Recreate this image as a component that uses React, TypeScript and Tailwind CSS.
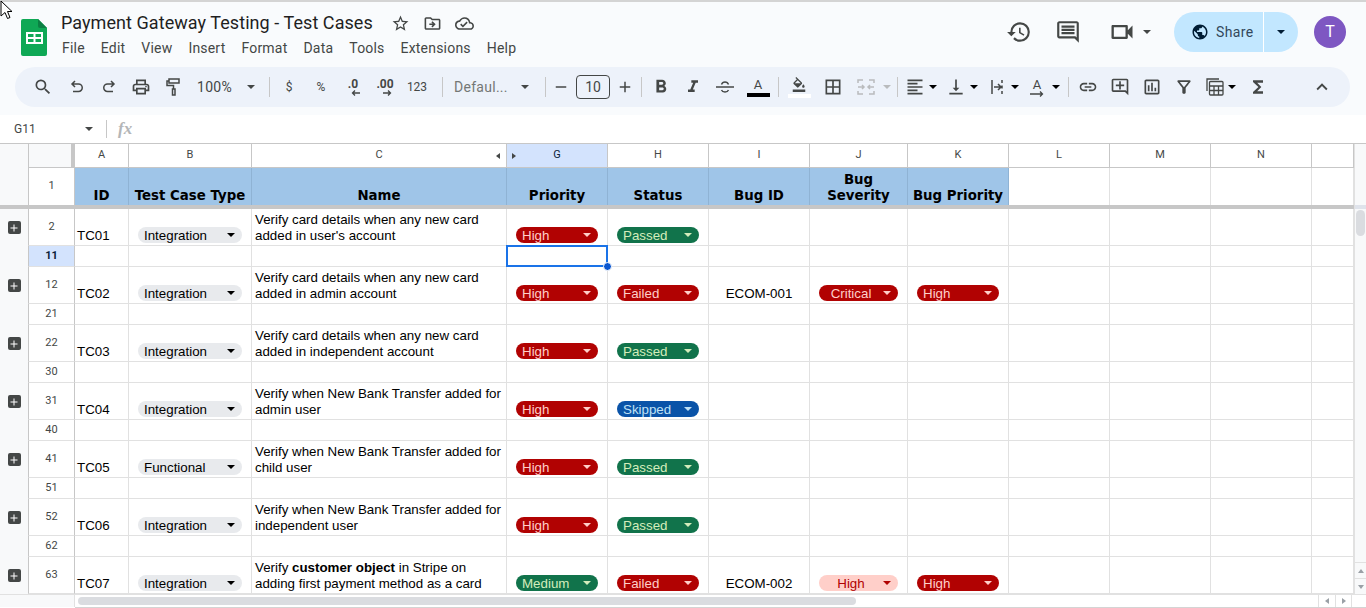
import React from 'react';
import {
  MdSearch, MdOutlinePrint, MdFormatBold, MdFormatItalic,
  MdFormatColorFill, MdBorderAll, MdFormatAlignLeft, MdVerticalAlignBottom, MdLink,
  MdOutlineAddComment, MdOutlineInsertChart, MdOutlineFilterAlt, MdFunctions, MdExpandLess, MdHistory,
  MdOutlineComment, MdOutlineVideocam, MdPublic, MdStarBorder, MdOutlineDriveFileMove, MdOutlineCloudDone,
  MdAdd, MdRemove,
} from 'react-icons/md';

const COLS = 'grid grid-cols-[28px_47px_54px_123px_255px_101px_101px_101px_98px_101px_101px_101px_101px_42px]';

type ChipKind = 'high' | 'passed' | 'failed' | 'skipped' | 'medium' | 'critical' | 'pale';

const chipStyles: Record<ChipKind, { cls: string; label: string }> = {
  high: { cls: 'bg-[#b10202] text-[#ffcfc9]', label: 'High' },
  passed: { cls: 'bg-[#11734b] text-[#d4edbc]', label: 'Passed' },
  failed: { cls: 'bg-[#b10202] text-[#ffcfc9]', label: 'Failed' },
  skipped: { cls: 'bg-[#0a53a8] text-[#bfe1f6]', label: 'Skipped' },
  medium: { cls: 'bg-[#11734b] text-[#d4edbc]', label: 'Medium' },
  critical: { cls: 'bg-[#b10202] text-[#ffcfc9]', label: 'Critical' },
  pale: { cls: 'bg-[#ffcfc9] text-[#b10202]', label: 'High' },
};

const rows = [
  { num: '2', gap: '11', id: 'TC01', type: 'Integration', name: <>Verify card details when any new card<br />added in user's account</>, priority: 'high', status: 'passed' },
  { num: '12', gap: '21', id: 'TC02', type: 'Integration', name: <>Verify card details when any new card<br />added in admin account</>, priority: 'high', status: 'failed', bug: 'ECOM-001', severity: 'critical', bugPriority: 'high' },
  { num: '22', gap: '30', id: 'TC03', type: 'Integration', name: <>Verify card details when any new card<br />added in independent account</>, priority: 'high', status: 'passed' },
  { num: '31', gap: '40', id: 'TC04', type: 'Integration', name: <>Verify when New Bank Transfer added for<br />admin user</>, priority: 'high', status: 'skipped' },
  { num: '41', gap: '51', id: 'TC05', type: 'Functional', name: <>Verify when New Bank Transfer added for<br />child user</>, priority: 'high', status: 'passed' },
  { num: '52', gap: '62', id: 'TC06', type: 'Integration', name: <>Verify when New Bank Transfer added for<br />independent user</>, priority: 'high', status: 'passed' },
  { num: '63', id: 'TC07', type: 'Integration', name: <>Verify <b>customer object</b> in Stripe on<br />adding first payment method as a card</>, priority: 'medium', status: 'failed', bug: 'ECOM-002', severity: 'pale', bugPriority: 'high' },
] as { num: string; gap?: string; id: string; type: string; name: React.ReactNode; priority: ChipKind; status: ChipKind; bug?: string; severity?: ChipKind; bugPriority?: ChipKind }[];

const Caret = ({ className = 'text-[#444746]' }: { className?: string }) => (
  <svg width="8" height="4" viewBox="0 0 8 4" className={`shrink-0 ${className}`}>
    <path d="M0 0h8L4 4z" fill="currentColor" />
  </svg>
);

const Btn = ({ children, className = '' }: { children: React.ReactNode; className?: string }) => (
  <div className={`w-8 h-8 shrink-0 flex items-center justify-center text-[#444746] ${className}`}>{children}</div>
);

const Sep = ({ className = '' }: { className?: string }) => (
  <div className={`w-px h-5 shrink-0 bg-[#c7c7c7] ${className}`} />
);

const Chip = ({ label, cls, center }: { label: string; cls: string; center?: boolean }) => (
  <div className={`h-4 rounded-full flex items-center pr-[7px] ${center ? '' : 'pl-[6px]'} ${cls}`}>
    <span className={`flex-1 leading-4 pt-[2px] ${center ? 'text-center' : ''}`}>{label}</span>
    <Caret className="text-current" />
  </div>
);

const StatusChip = ({ kind, center }: { kind: ChipKind; center?: boolean }) => (
  <Chip label={chipStyles[kind].label} cls={chipStyles[kind].cls} center={center} />
);

const SheetsLogo = () => (
  <svg width="26" height="37" viewBox="0 0 26 37" className="shrink-0">
    <path d="M2 0h15l9 9v26a2 2 0 0 1-2 2H2a2 2 0 0 1-2-2V2a2 2 0 0 1 2-2z" fill="#0fa855" />
    <path d="M17 0l9 9h-7a2 2 0 0 1-2-2z" fill="#0b8043" />
    <path d="M5 13h17v12H5z M7 15v3h5.500v-3z M14.500 15v3h5.500v-3z M7 20v3h5.500v-3z M14.500 20v3h5.500v-3z" fill="#fff" fillRule="evenodd" />
  </svg>
);

const Header = () => (
  <div className="h-[115px] shrink-0 bg-[#f9fbfd] border-t-2 border-[#d4d4d4] relative">
    <div className="h-[65px] flex pl-[21px] pr-5">
      <div className="pt-[17px]"><SheetsLogo /></div>
      <div className="ml-[14px] pt-[9px]">
        <div className="flex items-center h-6">
          <span className="text-[18px] leading-6 text-[#1f1f1f] font-['Roboto',sans-serif] tracking-[0.06px]">Payment Gateway Testing - Test Cases</span>
          <MdStarBorder className="ml-[18px] text-[#444746]" size={19} />
          <MdOutlineDriveFileMove className="ml-[13px] text-[#444746]" size={19} />
          <MdOutlineCloudDone className="ml-[13px] text-[#444746]" size={19} />
        </div>
        <div className="flex gap-4 ml-px mt-[3px] text-[14px] leading-5 text-[#444746] font-['Roboto',sans-serif] tracking-[0.2px]">
          <span>File</span><span>Edit</span><span>View</span><span>Insert</span><span>Format</span><span>Data</span><span>Tools</span><span>Extensions</span><span>Help</span>
        </div>
      </div>
      <div className="ml-auto flex items-center h-[60px] text-[#444746]">
        <MdHistory size={26} />
        <MdOutlineComment className="ml-[23px]" size={26} />
        <MdOutlineVideocam className="ml-[27px]" size={28} />
        <Caret className="ml-[7px] text-[#444746]" />
        <div className="ml-[23px] w-[124px] h-10 rounded-full bg-[#c2e7ff] flex items-center text-[#001d35]">
          <div className="w-[90px] h-full shrink-0 flex items-center pl-[17px] gap-[7px] border-r border-white">
            <MdPublic size={18} />
            <span className="text-[14px] text-[#33475b] font-['Roboto',sans-serif] tracking-[0.4px]">Share</span>
          </div>
          <div className="flex-1 flex justify-center"><Caret className="text-[#001d35]" /></div>
        </div>
        <div className="ml-4 w-8 h-8 rounded-full bg-[#7e57c2] text-white flex items-center justify-center text-[16px] font-['Roboto',sans-serif]">T</div>
      </div>
    </div>
    <Toolbar />
    <svg width="13" height="20" viewBox="0 0 13 20" className="absolute left-0 -top-[2px]">
      <path d="M1 1v15l4-3.500 2.500 6 2.500-1-2.500-6H12z" fill="#fff" stroke="#000" strokeWidth="1" />
    </svg>
  </div>
);

const Toolbar = () => (
  <div className="mx-[15px] h-10 w-[1335px] rounded-full bg-[#edf2fa] flex items-center pl-3 font-['Roboto',sans-serif]">
    <Btn><MdSearch size={20} /></Btn>
    <Btn className="ml-[2px]">
      <svg width="14" height="14" viewBox="0 0 14 14" fill="none" stroke="currentColor" strokeWidth="1.500">
        <path d="M5 1 2 4l3 3M2 4h6.500a3.750 3.750 0 0 1 0 7.500H3" />
      </svg>
    </Btn>
    <Btn>
      <svg width="14" height="14" viewBox="0 0 14 14" fill="none" stroke="currentColor" strokeWidth="1.500">
        <path d="M9 1l3 3-3 3M12 4H5.500a3.750 3.750 0 0 0 0 7.500H11" />
      </svg>
    </Btn>
    <Btn><MdOutlinePrint size={20} /></Btn>
    <Btn>
      <svg width="15" height="18" viewBox="0 0 15 18" fill="none" stroke="currentColor" strokeWidth="1.500">
        <path d="M3 1h10v4H3zM3 3H1v4.500h6.500V11M6.500 11h2.500v6H6.500z" />
      </svg>
    </Btn>
    <div className="w-[74px] shrink-0 flex items-center justify-between px-2 text-[14px] text-[#444746]">
      <span className="tracking-[0.02em]">100%</span><Caret />
    </div>
    <Sep className="ml-[6px]" />
    <Btn className="ml-[3px] text-[12px] text-[#5f6368]">$</Btn>
    <Btn className="text-[12px] text-[#5f6368]">%</Btn>
    <Btn>
      <div className="flex flex-col items-center leading-none">
        <span className="text-[12px] font-bold leading-[11px] text-[#444746]">.0</span>
        <svg width="9" height="6" viewBox="0 0 9 6" className="ml-[5px]"><path d="M9 3H2M4 .500 1.500 3 4 5.500" fill="none" stroke="#444746" strokeWidth="1.300" /></svg>
      </div>
    </Btn>
    <Btn>
      <div className="flex flex-col items-center leading-none">
        <span className="text-[12px] font-bold leading-[11px] text-[#444746]">.00</span>
        <svg width="9" height="6" viewBox="0 0 9 6" className="ml-[5px]"><path d="M0 3h7M5 .500 7.500 3 5 5.500" fill="none" stroke="#444746" strokeWidth="1.300" /></svg>
      </div>
    </Btn>
    <Btn className="text-[12px] text-[#5f6368]">123</Btn>
    <Sep className="ml-[9px]" />
    <div className="ml-[11px] w-[75px] shrink-0 flex items-center justify-between text-[14px] text-[#747775]">
      <span className="tracking-[0.02em]">Defaul...</span><Caret />
    </div>
    <Sep className="ml-4" />
    <div className="ml-[3px] w-6 flex justify-center text-[#444746]"><MdRemove size={18} /></div>
    <div className="ml-[3px] w-[34px] h-6 border border-[#444746] rounded flex items-center justify-center text-[14px] text-[#444746]">10</div>
    <div className="ml-[3px] w-6 flex justify-center text-[#444746]"><MdAdd size={18} /></div>
    <Sep className="ml-1" />
    <Btn className="ml-[3px]"><MdFormatBold size={22} /></Btn>
    <Btn><MdFormatItalic size={20} /></Btn>
    <Btn>
      <svg width="18" height="14" viewBox="0 0 18 14" fill="none" stroke="currentColor" strokeWidth="1.400">
        <path d="M0 7h18M5.500 4.500C6 3 7.500 2 9 2s3 1 3.500 2.500M5.500 10c.5 1.300 2 2 3.500 2s3-.7 3.500-2" />
      </svg>
    </Btn>
    <Btn className="ml-px">
      <div className="flex flex-col items-center">
        <span className="text-[13px] leading-[14px] text-[#444746]">A</span>
        <div className="w-[23px] h-1 bg-black mt-px" />
      </div>
    </Btn>
    <Sep className="ml-1" />
    <Btn className="ml-1">
      <div className="flex flex-col items-center">
        <MdFormatColorFill size={16} className="h-[15px]" />
        <div className="w-[23px] h-1 bg-white mt-[2px]" />
      </div>
    </Btn>
    <Btn className="ml-[2px]"><MdBorderAll size={20} /></Btn>
    <Btn className="ml-px text-[#b9bbbd]">
      <svg width="18" height="18" viewBox="0 0 18 18" fill="none" stroke="currentColor" strokeWidth="1.500">
        <path d="M1 5V2h5M12 2h5v3M1 13v3h5M12 16h5v-3M1 9h6M5 7l2 2-2 2M17 9h-6M13 7l-2 2 2 2" />
      </svg>
    </Btn>
    <Caret className="ml-px text-[#b9bbbd]" />
    <Sep className="ml-[6px]" />
    <Btn className="ml-px"><MdFormatAlignLeft size={20} /></Btn>
    <Caret className="-ml-[2px]" />
    <Btn className="ml-[3px]"><MdVerticalAlignBottom size={20} /></Btn>
    <Caret className="-ml-[2px]" />
    <Btn className="ml-[3px]">
      <svg width="18" height="18" viewBox="0 0 18 18" fill="none" stroke="#444746" strokeWidth="1.500">
        <path d="M4 2v14M14 2v3M14 7.500v3M14 13v3M6 9h7M10 6l3 3-3 3" />
      </svg>
    </Btn>
    <Caret className="-ml-[2px]" />
    <Btn className="ml-[2px]">
      <div className="flex flex-col items-center">
        <span className="text-[13px] leading-[13px] text-[#444746]">A</span>
        <svg width="14" height="6" viewBox="0 0 14 6"><path d="M0 3h12M10 .500 12.500 3 10 5.500" fill="none" stroke="#444746" strokeWidth="1.300" /></svg>
      </div>
    </Btn>
    <Caret className="-ml-px" />
    <Sep className="ml-2" />
    <Btn className="ml-[3px]"><MdLink size={20} /></Btn>
    <Btn><MdOutlineAddComment size={20} /></Btn>
    <Btn><MdOutlineInsertChart size={20} /></Btn>
    <Btn><MdOutlineFilterAlt size={20} /></Btn>
    <Btn className="-ml-px">
      <svg width="18" height="18" viewBox="0 0 18 18" fill="none" stroke="#444746" strokeWidth="1.300">
        <path d="M1 13V1h12" />
        <rect x="3.500" y="3.500" width="13.500" height="13.500" rx="1" />
        <path d="M3.500 8h13.500M8 8v9M12.500 8v9M3.500 12.500h13.500" />
      </svg>
    </Btn>
    <Caret className="-ml-[3px]" />
    <Btn className="ml-[6px]"><MdFunctions size={20} /></Btn>
    <Btn className="ml-8"><MdExpandLess size={22} /></Btn>
  </div>
);

const FormulaBar = () => (
  <div className="h-[29px] shrink-0 bg-white border-b border-[#c7c7c7] flex items-center">
    <span className="ml-[14px] w-[71px] text-[12px] text-[#444746] font-['Roboto',sans-serif]">G11</span>
    <Caret />
    <div className="ml-[13px] w-px h-[18px] bg-[#c7c7c7]" />
    <span className="ml-[11px] text-[17px] font-bold italic text-[#b4b6b8] font-['Liberation_Serif',serif]">fx</span>
  </div>
);

const letters = ['A', 'B', 'C', 'G', 'H', 'I', 'J', 'K', 'L', 'M', 'N', ''];
const titles = ['ID', 'Test Case Type', 'Name', 'Priority', 'Status', 'Bug ID', <>Bug<br />Severity</>, 'Bug Priority'];

const ColumnHeaders = () => (
  <div className={`${COLS} h-6 text-[11px] text-[#444746] font-['Roboto',sans-serif]`}>
    <div className="bg-[#f8f9fa]" />
    <div className="flex border-l border-b border-[#c7c7c7] bg-[#f8f9fa]">
      <div className="flex-1" />
      <div className="w-1 -mb-px bg-[#c7c7c7]" />
    </div>
    {letters.map((l, i) => (
      <div key={i} className={`relative flex items-center justify-center border-r border-b border-[#c7c7c7] ${l === 'G' ? 'bg-[#d3e3fd] text-[#0b1f3a]' : 'bg-white'}`}>
        {l}
        {l === 'C' && <svg width="4" height="6" viewBox="0 0 4 6" className="absolute right-[6px] top-[9px]"><path d="M4 0v6L0 3z" fill="#444746" /></svg>}
        {l === 'G' && <svg width="4" height="6" viewBox="0 0 4 6" className="absolute left-[5px] top-[9px]"><path d="M0 0v6l4-3z" fill="#444746" /></svg>}
      </div>
    ))}
  </div>
);

const TitleRow = () => (
  <div className={`${COLS} h-[37px]`}>
    <div className="bg-[#f8f9fa]" />
    <div className="flex items-center justify-center bg-white border-l border-r border-[#c7c7c7] text-[11px] text-[#444746] font-['Roboto',sans-serif]">1</div>
    {titles.map((t, i) => (
      <div key={i} className="flex items-end justify-center text-center bg-[#9fc5e8] border-r border-[#8fb3d4] text-[13.33px] leading-4 font-bold text-black font-['DejaVu_Sans',sans-serif] pb-px whitespace-nowrap">
        <div>{t}</div>
      </div>
    ))}
    {[0, 1, 2, 3].map((i) => (
      <div key={i} className="bg-white border-r border-[#e1e1e1]" />
    ))}
  </div>
);

const Cell = ({ children, className = 'pb-[2px]' }: { children?: React.ReactNode; className?: string }) => (
  <div className={`border-r border-b border-[#e1e1e1] flex flex-col justify-end ${className}`}>{children}</div>
);

const RowNum = ({ n, active }: { n: string; active?: boolean }) => (
  <div className={`flex items-center justify-center border-l border-r border-b border-[#c7c7c7] border-b-[#e1e1e1] text-[11px] font-['Roboto',sans-serif] ${active ? 'bg-[#d3e3fd] text-[#0b1f3a] font-bold' : 'bg-white text-[#444746]'}`}>{n}</div>
);

const DataRow = ({ row }: { row: (typeof rows)[number] }) => (
  <div className={`${COLS} h-[37px] text-[13.33px] leading-4 text-black font-['Liberation_Sans',sans-serif]`}>
    <div className="bg-[#f8f9fa] flex items-center justify-center">
      <div className="w-[13px] h-[13px] rounded-[2px] bg-[#444746] text-white flex items-center justify-center"><MdAdd size={12} /></div>
    </div>
    <RowNum n={row.num} />
    <Cell className="pl-[2px] pb-px">{row.id}</Cell>
    <Cell className="pl-[9px] pr-[9px] pb-[2px]"><Chip label={row.type} cls="bg-[#e8eaed] text-black" /></Cell>
    <Cell className="pl-[3px] pb-px whitespace-nowrap"><div>{row.name}</div></Cell>
    <Cell className="pl-[9px] pr-[9px] pb-[2px]"><StatusChip kind={row.priority} /></Cell>
    <Cell className="pl-[9px] pr-[9px] pb-[2px]"><StatusChip kind={row.status} /></Cell>
    <Cell className="text-center pb-px">{row.bug}</Cell>
    <Cell className="pl-[9px] pr-[9px] pb-[2px]">{row.severity && <StatusChip kind={row.severity} center />}</Cell>
    <Cell className="pl-[9px] pr-[9px] pb-[2px]">{row.bugPriority && <StatusChip kind={row.bugPriority} />}</Cell>
    <Cell /><Cell /><Cell /><Cell />
  </div>
);

const GapRow = ({ n, selected }: { n: string; selected?: boolean }) => (
  <div className={`${COLS} h-[21px]`}>
    <div className="bg-[#f8f9fa]" />
    <RowNum n={n} active={selected} />
    <Cell /><Cell /><Cell />
    <Cell className="relative">
      {selected && (
        <>
          <div className="absolute -left-px -top-px -right-px -bottom-px border-2 border-[#1a73e8]" />
          <div className="absolute -right-[5px] -bottom-[5px] w-[9px] h-[9px] rounded-full bg-[#0b57d0] border border-white" />
        </>
      )}
    </Cell>
    <Cell /><Cell /><Cell /><Cell /><Cell /><Cell /><Cell /><Cell />
  </div>
);

const Sheet = () => (
  <div className="flex-1 min-h-0 flex overflow-hidden">
    <div className="w-[1354px] shrink-0">
      <ColumnHeaders />
      <TitleRow />
      <div className="h-1 bg-[#c7c7c7]" />
      {rows.map((row) => (
        <React.Fragment key={row.id}>
          <DataRow row={row} />
          {row.gap && <GapRow n={row.gap} selected={row.gap === '11'} />}
        </React.Fragment>
      ))}
    </div>
    <div className="w-3 shrink-0 bg-[#f8f9fa] border-l border-[#e1e1e1] flex flex-col">
      <div className="h-[61px] shrink-0" />
      <div className="h-1 shrink-0 bg-[#dfe3eb]" />
      <div className="ml-[1px] mt-px w-[9px] h-[26px] rounded-full bg-[#dadce0]" />
      <div className="mt-auto h-4 flex items-center justify-center border-t border-[#e1e1e1]">
        <svg width="6" height="4" viewBox="0 0 6 4"><path d="M3 0l3 4H0z" fill="#9aa0a6" /></svg>
      </div>
      <div className="h-4 flex items-center justify-center border-t border-[#e1e1e1]">
        <svg width="6" height="4" viewBox="0 0 6 4"><path d="M3 4l3-4H0z" fill="#9aa0a6" /></svg>
      </div>
    </div>
  </div>
);

const HScroll = () => (
  <div className="h-[14px] shrink-0 flex bg-white border-t border-[#e1e1e1]">
    <div className="w-[75px] h-[12px] bg-[#f8f9fa] border-r border-[#e1e1e1]" />
    <div className="flex-1 h-[12px] border-b border-[#d4d4d4] box-content flex items-center">
      <div className="ml-[3px] w-[778px] h-2 rounded-full bg-[#dadce0]" />
      <div className="ml-auto mr-[14px] flex">
        <div className="w-[17px] h-[12px] flex items-center justify-center border-l border-[#e1e1e1]">
          <svg width="4" height="6" viewBox="0 0 4 6"><path d="M4 0v6L0 3z" fill="#9aa0a6" /></svg>
        </div>
        <div className="w-[17px] h-[12px] flex items-center justify-center border-l border-r border-[#e1e1e1]">
          <svg width="4" height="6" viewBox="0 0 4 6"><path d="M0 0v6l4-3z" fill="#9aa0a6" /></svg>
        </div>
      </div>
    </div>
  </div>
);

const App = () => {
  return (
    <div className="w-[1366px] h-[608px] overflow-hidden flex flex-col bg-white">
      <Header />
      <FormulaBar />
      <Sheet />
      <HScroll />
    </div>
  );
};

export default App;
